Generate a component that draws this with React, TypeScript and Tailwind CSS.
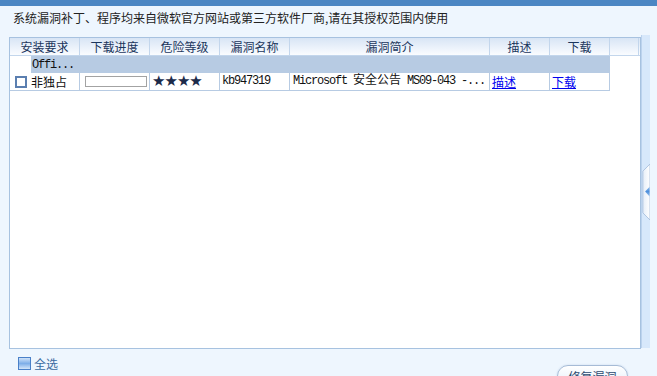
const cjk = "font-['SimSun','Noto_Sans_CJK_SC',sans-serif]";
const mono = "font-['Liberation_Mono','Noto_Sans_CJK_SC',monospace] text-[12px] tracking-[-1.2px]";

const columns = [
  { label: '安装要求', width: 'w-[70px]' },
  { label: '下载进度', width: 'w-[70px]' },
  { label: '危险等级', width: 'w-[70px]' },
  { label: '漏洞名称', width: 'w-[70px]' },
  { label: '漏洞简介', width: 'w-[200px]' },
  { label: '描述', width: 'w-[60px]' },
  { label: '下载', width: 'w-[60px]' },
  { label: '', width: 'w-[29px]' },
];

function CollapseTab() {
  return (
    <svg width="9" height="64" viewBox="0 0 9 64">
      <defs>
        <linearGradient id="tabFill" x1="0" y1="0" x2="1" y2="0">
          <stop offset="0" stopColor="#e6eef8" />
          <stop offset="1" stopColor="#ffffff" />
        </linearGradient>
        <linearGradient id="arrowFill" x1="0" y1="0" x2="0" y2="1">
          <stop offset="0" stopColor="#9cc4ef" />
          <stop offset="0.5" stopColor="#4d8fdc" />
          <stop offset="1" stopColor="#9cc4ef" />
        </linearGradient>
      </defs>
      <path d="M9 0.5 L1 8.5 L1 55.5 L9 63.5 Z" fill="url(#tabFill)" stroke="#a9c0dd" strokeWidth="1" />
      <path d="M3.5 31.5 L8.5 26 L8.5 37 Z" fill="url(#arrowFill)" />
    </svg>
  );
}

export default function App() {
  return (
    <div className={`w-[657px] h-[376px] overflow-hidden bg-[#eef6fe] text-[12px] ${cjk}`}>
      <div className="h-[6px] bg-[#4b86c3]" />

      <div className="h-[31px] pl-[13px] pt-[5px] leading-[14px] text-[#222]">
        系统漏洞补丁、程序均来自微软官方网站或第三方软件厂商,请在其授权范围内使用
      </div>

      <div className="flex">
        <div className="ml-[9px] w-[632px] h-[312px] border border-[#a7c2e0] bg-white">
          {/* header */}
          <div className="flex h-[18px] border-b border-[#c3d6ec] bg-gradient-to-b from-[#d8e5f5] to-[#fafcff]">
            {columns.map((c, i) => (
              <div
                key={i}
                className={`${c.width} shrink-0 border-r border-[#c3d6ec] text-center leading-[17px] text-[#1b365c]`}
              >
                {c.label}
              </div>
            ))}
          </div>

          {/* group row */}
          <div className="flex h-[17px]">
            <div className="w-[21px] shrink-0" />
            <div className={`w-[579px] bg-[#b7cbe3] pl-[1px] pt-[2px] leading-[15px] text-[#111] ${mono}`}>
              Offi...
            </div>
          </div>

          {/* data row */}
          <div className="flex h-[18px] w-[600px] border-b border-[#b7cbe3] text-[#111]">
            <div className="w-[70px] shrink-0 flex items-center gap-[4px] pl-[5px] border-r border-[#b7cbe3]">
              <span className="w-[12px] h-[12px] border-2 border-[#5b7fb0] bg-white" />
              <span className="leading-[17px]">非独占</span>
            </div>
            <div className="w-[70px] shrink-0 flex items-center pl-[5px] border-r border-[#b7cbe3]">
              <div className="w-[62px] h-[11px] border border-[#a3a3a3] bg-white" />
            </div>
            <div className="w-[70px] shrink-0 pl-[2px] border-r border-[#b7cbe3] text-[15px] leading-[17px] tracking-[-1px] text-[#1c2b4a] font-['DejaVu_Sans',sans-serif]">
              ★★★★
            </div>
            <div className={`w-[70px] shrink-0 pl-[2px] border-r border-[#b7cbe3] leading-[17px] ${mono}`}>
              kb947319
            </div>
            <div className={`w-[200px] shrink-0 pl-[3px] border-r border-[#b7cbe3] leading-[17px] whitespace-nowrap overflow-hidden ${mono}`}>
              Microsoft <span className="tracking-normal">安全公告</span> MS09-043 -...
            </div>
            <div className="w-[60px] shrink-0 pl-[2px] border-r border-[#b7cbe3] leading-[17px]">
              <a className="text-[#0000ee] underline">描述</a>
            </div>
            <div className="w-[60px] shrink-0 pl-[2px] border-r border-[#b7cbe3] leading-[17px]">
              <a className="text-[#0000ee] underline">下载</a>
            </div>
          </div>
        </div>

        <div className="w-[9px] h-[313px] -mt-[2px] flex items-center justify-end bg-[#d7e8fb] border-l border-[#bcd3ee]">
          <CollapseTab />
        </div>
      </div>

      <div className="flex items-start">
        <div className="mt-[8px] ml-[18px] flex items-center gap-[3px]">
          <span className="w-[13px] h-[13px] border border-[#4a80c8] bg-gradient-to-b from-[#cfe2f8] via-[#7eaee8] to-[#d3e5f9]" />
          <span className="leading-[13px] text-[#3a6aa0]">全选</span>
        </div>
        <div className="ml-auto mr-[29px] mt-[16px] w-[71px] h-[22px] rounded-full border border-[#a6bbd6] bg-gradient-to-b from-white to-[#e4eef9] shadow-[0_0_2px_#c6d6ea] text-center leading-[22px] text-[#2c4a70]">
          修复漏洞
        </div>
      </div>
    </div>
  );
}
